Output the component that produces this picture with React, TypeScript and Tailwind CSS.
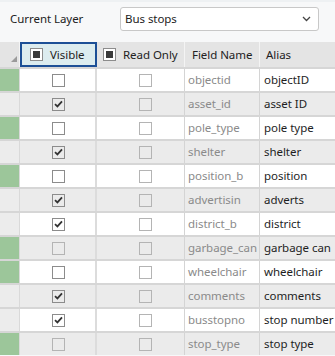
import React from "react";

type Row = { field: string; alias: string; visible: boolean; green: boolean; disabledVis?: boolean };

const rows: Row[] = [
  { field: "objectid", alias: "objectID", visible: false, green: true },
  { field: "asset_id", alias: "asset ID", visible: true, green: false },
  { field: "pole_type", alias: "pole type", visible: false, green: true },
  { field: "shelter", alias: "shelter", visible: true, green: false },
  { field: "position_b", alias: "position", visible: false, green: true },
  { field: "advertisin", alias: "adverts", visible: true, green: false },
  { field: "district_b", alias: "district", visible: true, green: false },
  { field: "garbage_can", alias: "garbage can", visible: false, green: true, disabledVis: true },
  { field: "wheelchair", alias: "wheelchair", visible: false, green: true },
  { field: "comments", alias: "comments", visible: true, green: false },
  { field: "busstopno", alias: "stop number", visible: true, green: false },
  { field: "stop_type", alias: "stop type", visible: false, green: true, disabledVis: true },
];

function Check({ checked, light }: { checked: boolean; light?: boolean }) {
  return (
    <div
      className={`w-[13px] h-[13px] border flex items-center justify-center ${
        light ? "border-[#b4b4b4]" : "border-[#8c8c8c]"
      }`}
    >
      {checked && (
        <svg width="9" height="8" viewBox="0 0 9 8">
          <path d="M1 4.2 L3.4 6.4 L8 1.4" stroke="#333" strokeWidth="1.8" fill="none" />
        </svg>
      )}
    </div>
  );
}

function HeaderBox() {
  return (
    <div className="w-[13px] h-[13px] border border-[#8c8c8c] bg-white flex items-center justify-center">
      <div className="w-[7px] h-[7px] bg-[#3a3a3a]" />
    </div>
  );
}

export default function App() {
  return (
    <div
      className="w-[335px] h-[356px] overflow-hidden bg-[#f7f8f9] text-[11.5px] tracking-[-0.05px] text-[#222]"
      style={{ fontFamily: '"Noto Sans", "Open Sans", sans-serif' }}
    >
      <div className="h-[42px] flex items-start pt-[5px] border-t-2 border-[#eef1f3]">
        <div className="w-[120px] h-[24px] flex items-center pl-[10px] text-[#222]">Current Layer</div>
        <div className="w-[199px] h-[24px] bg-white border border-[#c8c8c8] rounded-[3px] flex items-center pl-[4px] pr-[7px]">
          <span>Bus stops</span>
          <svg className="ml-auto" width="9" height="6" viewBox="0 0 9 6">
            <path d="M1 1 L4.5 4.5 L8 1" stroke="#444" strokeWidth="1.3" fill="none" />
          </svg>
        </div>
      </div>
      <div className="grid grid-cols-[20px_77px_88px_75px_75px] h-[25px] bg-[#e4e4e4]">
        <div className="relative border-r border-[#f4f4f4]">
          <svg className="absolute right-[2px] bottom-[5px]" width="6" height="6" viewBox="0 0 6 6">
            <path d="M6 0 L6 6 L0 6 Z" fill="#9a9a9a" />
          </svg>
        </div>
        <div className="border-2 border-[#1c4f96] bg-[#dcecef] flex items-center pl-[8px] gap-[7px]">
          <HeaderBox />
          <span>Visible</span>
        </div>
        <div className="flex items-center pl-[6px] gap-[7px] border-r border-[#f4f4f4]">
          <HeaderBox />
          <span>Read Only</span>
        </div>
        <div className="flex items-center pl-[7px] border-r border-[#f4f4f4]">
          <span>Field Name</span>
        </div>
        <div className="flex items-center pl-[6px]">
          <span>Alias</span>
        </div>
      </div>
      {rows.map((r, i) => {
        const bg = i % 2 === 0 ? "bg-white" : "bg-[#ebebeb]";
        return (
          <div
            key={r.field}
            className={`grid grid-cols-[20px_77px_88px_75px_75px] h-[24px] border-t-2 border-[#d6d6d6] ${bg}`}
          >
            <div className={`border-r border-[#d9d9d9] ${r.green ? "bg-[#9cc69a]" : "bg-[#ececec]"}`} />
            <div className="flex items-center justify-center border-r-2 border-[#dcdcdc] pl-[1px]">
              <Check checked={r.visible} light={r.disabledVis} />
            </div>
            <div className="flex items-center justify-center border-r border-[#d4d4d4] pl-[9px]">
              <Check checked={false} light />
            </div>
            <div className="flex items-center pl-[3px] border-r border-[#d4d4d4] text-[#8a8a8a] whitespace-nowrap overflow-hidden">
              {r.field}
            </div>
            <div className="flex items-center pl-[4px] text-[#1e1e1e] whitespace-nowrap overflow-hidden">
              {r.alias}
            </div>
          </div>
        );
      })}
    </div>
  );
}
